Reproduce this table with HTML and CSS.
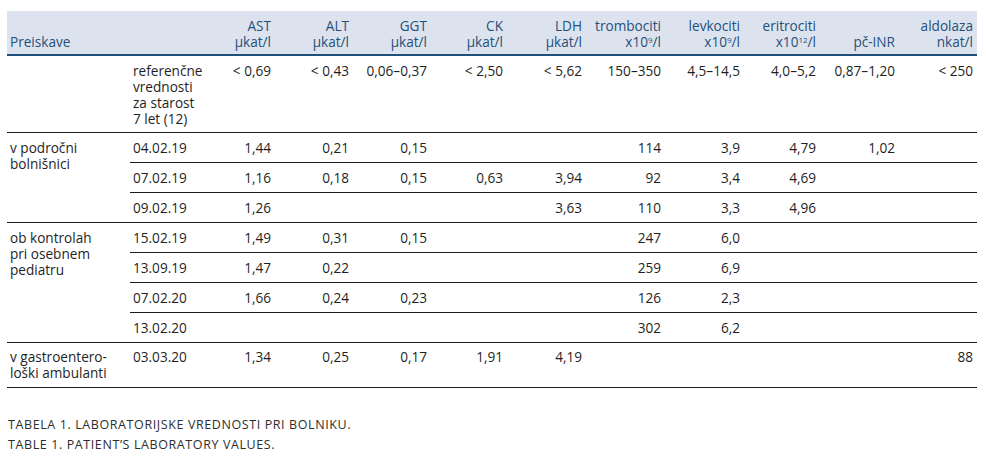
FILE: index.html
```html
<!DOCTYPE html>
<html lang="sl">
<head>
<meta charset="utf-8">
<title>Tabela 1</title>
<link rel="stylesheet" href="styles.css">
</head>
<body>
<table class="lab">
  <colgroup>
    <col class="c-group"><col class="c-date"><col class="c-ast"><col class="c-alt"><col class="c-ggt"><col class="c-ck"><col class="c-ldh"><col class="c-tr"><col class="c-lev"><col class="c-eri"><col class="c-inr"><col class="c-ald">
  </colgroup>
  <thead>
    <tr>
      <th class="txt">Preiskave</th>
      <th class="txt"></th>
      <th>AST<br>µkat/l</th>
      <th>ALT<br>µkat/l</th>
      <th>GGT<br>µkat/l</th>
      <th>CK<br>µkat/l</th>
      <th>LDH<br>µkat/l</th>
      <th>trombociti<br>x10<sup>9</sup>/l</th>
      <th>levkociti<br>x10<sup>9</sup>/l</th>
      <th>eritrociti<br>x10<sup>12</sup>/l</th>
      <th>pč-INR</th>
      <th>aldolaza<br>nkat/l</th>
    </tr>
  </thead>
  <tbody>
    <tr class="ref">
      <td class="txt"></td>
      <td class="txt">referenčne<br>vrednosti<br>za starost<br>7 let (12)</td>
      <td>&lt; 0,69</td>
      <td>&lt; 0,43</td>
      <td>0,06–0,37</td>
      <td>&lt; 2,50</td>
      <td>&lt; 5,62</td>
      <td>150–350</td>
      <td>4,5–14,5</td>
      <td>4,0–5,2</td>
      <td>0,87–1,20</td>
      <td>&lt; 250</td>
    </tr>
    <tr>
      <td class="txt" rowspan="3">v področni<br>bolnišnici</td>
      <td class="txt">04.02.19</td>
      <td>1,44</td><td>0,21</td><td>0,15</td><td></td><td></td><td>114</td><td>3,9</td><td>4,79</td><td>1,02</td><td></td>
    </tr>
    <tr>
      <td class="txt">07.02.19</td>
      <td>1,16</td><td>0,18</td><td>0,15</td><td>0,63</td><td>3,94</td><td>92</td><td>3,4</td><td>4,69</td><td></td><td></td>
    </tr>
    <tr>
      <td class="txt">09.02.19</td>
      <td>1,26</td><td></td><td></td><td></td><td>3,63</td><td>110</td><td>3,3</td><td>4,96</td><td></td><td></td>
    </tr>
    <tr>
      <td class="txt" rowspan="4">ob kontrolah<br>pri osebnem<br>pediatru</td>
      <td class="txt">15.02.19</td>
      <td>1,49</td><td>0,31</td><td>0,15</td><td></td><td></td><td>247</td><td>6,0</td><td></td><td></td><td></td>
    </tr>
    <tr>
      <td class="txt">13.09.19</td>
      <td>1,47</td><td>0,22</td><td></td><td></td><td></td><td>259</td><td>6,9</td><td></td><td></td><td></td>
    </tr>
    <tr>
      <td class="txt">07.02.20</td>
      <td>1,66</td><td>0,24</td><td>0,23</td><td></td><td></td><td>126</td><td>2,3</td><td></td><td></td><td></td>
    </tr>
    <tr>
      <td class="txt">13.02.20</td>
      <td></td><td></td><td></td><td></td><td></td><td>302</td><td>6,2</td><td></td><td></td><td></td>
    </tr>
    <tr class="last">
      <td class="txt">v gastroentero-<br>loški ambulanti</td>
      <td class="txt">03.03.20</td>
      <td>1,34</td><td>0,25</td><td>0,17</td><td>1,91</td><td>4,19</td><td></td><td></td><td></td><td></td><td>88</td>
    </tr>
  </tbody>
</table>
<div class="caption">
  <p>Tabela 1. Laboratorijske vrednosti pri bolniku.</p>
  <p>Table 1. Patient’s laboratory values.</p>
</div>
</body>
</html>
```

FILE: styles.css
```css
html, body {
  margin: 0;
  background: #ffffff;
}
body {
  padding: 11px 9px 0 7px;
  font-family: "Open Sans", "Noto Sans", "DejaVu Sans", sans-serif;
  font-size: 13.6px;
  color: #1f1f1f;
}
.lab {
  border-collapse: collapse;
  table-layout: fixed;
  width: 970px;
}
.c-group { width: 123px; }
.c-date { width: 80px; }
.c-ast { width: 65px; }
.c-alt { width: 78px; }
.c-ggt { width: 78px; }
.c-ck { width: 76px; }
.c-ldh { width: 79px; }
.c-tr { width: 79px; }
.c-lev { width: 79px; }
.c-eri { width: 76px; }
.c-inr { width: 79px; }
.c-ald { width: 78px; }

.lab th {
  background: #dde3ee;
  color: #24507a;
  font-weight: normal;
  text-align: right;
  vertical-align: bottom;
  line-height: 16px;
  padding: 7px 4px 4px 3px;
  border-bottom: 2px solid #1f4f7a;
  white-space: nowrap;
}
.lab th.txt, .lab td.txt {
  text-align: left;
}
.lab sup {
  font-size: 8px;
  line-height: 8px;
  vertical-align: 4px;
}
.lab td {
  text-align: right;
  vertical-align: top;
  line-height: 16px;
  padding: 7px 4px 6px 3px;
  border-bottom: 1px solid #1a1a1a;
  white-space: nowrap;
}
.lab tr.ref td {
  padding: 7px 4px 5px 3px;
}
.lab tr.last td {
  padding: 6px 4px 6px 3px;
}
.caption {
  margin-top: 27px;
  padding-left: 1px;
  color: #2e2e2e;
  font-size: 12.5px;
  letter-spacing: 0.6px;
  text-transform: uppercase;
}
.caption p {
  margin: 0;
  line-height: 20px;
}
```
